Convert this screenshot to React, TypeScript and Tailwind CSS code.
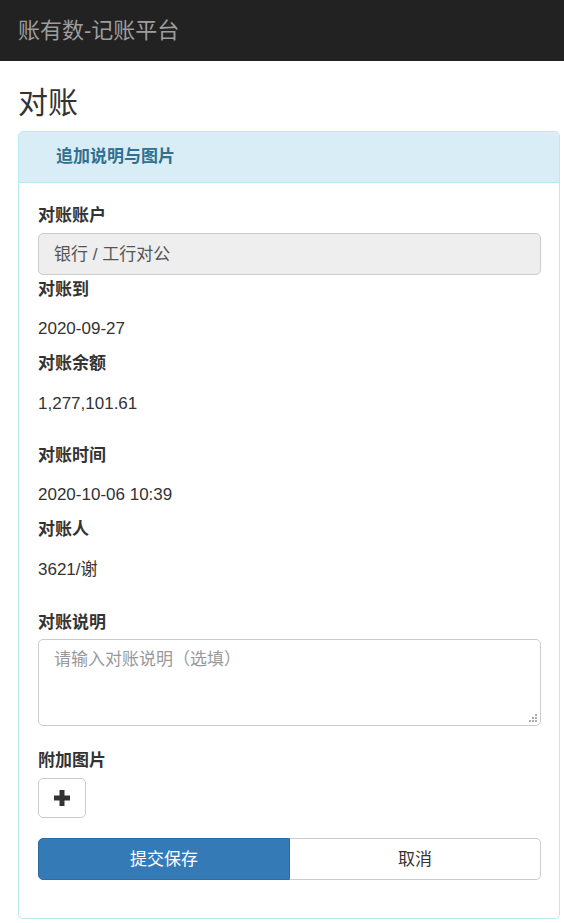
import { useState } from "react"

const font = "font-['Liberation_Sans','Noto_Sans_CJK_SC',sans-serif]"

function Label({ text, className = "" }: { text: string; className?: string }) {
  return <div className={`pt-[2px] text-[17px] leading-[24px] font-bold text-[#333] ${className}`}>{text}</div>
}

function Value({ text, className = "" }: { text: string; className?: string }) {
  return <div className={`pt-[2px] text-[17px] leading-[24px] text-[#333] ${className}`}>{text}</div>
}

export default function App() {
  const [note, setNote] = useState("")

  return (
    <div className={`min-h-[923px] bg-white ${font}`}>
      {/* top navbar */}
      <div className="h-[61px] bg-[#222] flex items-center px-[18px]">
        <span className="text-[22px] text-[#9d9d9d] leading-none">账有数-记账平台</span>
      </div>

      <div className="pl-[18px] pr-[4px]">
        <h2 className="mt-[25px] mb-[12px] text-[30px] leading-[33px] font-normal text-[#333]">对账</h2>

        <div className="border border-[#bce8f1] rounded-[5px] overflow-hidden">
          <div className="h-[51px] bg-[#d9edf7] border-b border-[#bce8f1] flex items-center pl-[37px]">
            <span className="text-[17px] font-bold text-[#31708f]">追加说明与图片</span>
          </div>

          <div className="pl-[19px] pr-[18px] pt-[19px] pb-[38px] flex flex-col">
            <Label text="对账账户" />
            <div className="mt-[5px] h-[42px] rounded-[5px] border border-[#ccc] bg-[#eee] flex items-center px-[15px] pt-[1px] text-[17px] text-[#555]">
              银行 / 工行对公
            </div>

            <Label text="对账到" className="mt-[1px]" />
            <Value text="2020-09-27" className="mt-[13px]" />

            <Label text="对账余额" className="mt-[9px]" />
            <Value text="1,277,101.61" className="mt-[14px]" />

            <Label text="对账时间" className="mt-[26px]" />
            <Value text="2020-10-06 10:39" className="mt-[13px]" />

            <Label text="对账人" className="mt-[9px]" />
            <Value text="3621/谢" className="mt-[14px]" />

            <Label text="对账说明" className="mt-[27px]" />
            <div className="relative mt-[4px] flex">
              <textarea
                value={note}
                onChange={(e) => setNote(e.target.value)}
                placeholder="请输入对账说明（选填）"
                className="flex-1 h-[87px] rounded-[5px] border border-[#ccc] px-[15px] py-[8px] text-[17px] leading-[24px] text-[#555] placeholder:text-[#999] outline-none resize-none"
              />
              {/* resize grip */}
              <svg className="absolute right-[3px] bottom-[3px]" width="10" height="10" viewBox="0 0 10 10">
                <rect x="7" y="1" width="2" height="2" fill="#aaa" />
                <rect x="4" y="4" width="2" height="2" fill="#aaa" />
                <rect x="7" y="4" width="2" height="2" fill="#aaa" />
                <rect x="1" y="7" width="2" height="2" fill="#aaa" />
                <rect x="4" y="7" width="2" height="2" fill="#aaa" />
                <rect x="7" y="7" width="2" height="2" fill="#aaa" />
              </svg>
            </div>

            <Label text="附加图片" className="mt-[21px]" />
            <button className="mt-[5px] w-[48px] h-[40px] rounded-[5px] border border-[#ccc] bg-white flex items-center justify-center">
              <svg width="16" height="16" viewBox="0 0 16 16">
                <path d="M5.5 0h5v5.5H16v5h-5.5V16h-5v-5.5H0v-5h5.5z" fill="#333" />
              </svg>
            </button>

            <div className="mt-[20px] h-[42px] flex">
              <button className="flex-1 rounded-l-[5px] bg-[#337ab7] border border-[#2e6da4] text-white text-[17px] pt-[1px]">
                提交保存
              </button>
              <button className="flex-1 rounded-r-[5px] bg-white border border-l-0 border-[#ccc] text-[#333] text-[17px] pt-[1px]">
                取消
              </button>
            </div>
          </div>
        </div>
      </div>
    </div>
  )
}
